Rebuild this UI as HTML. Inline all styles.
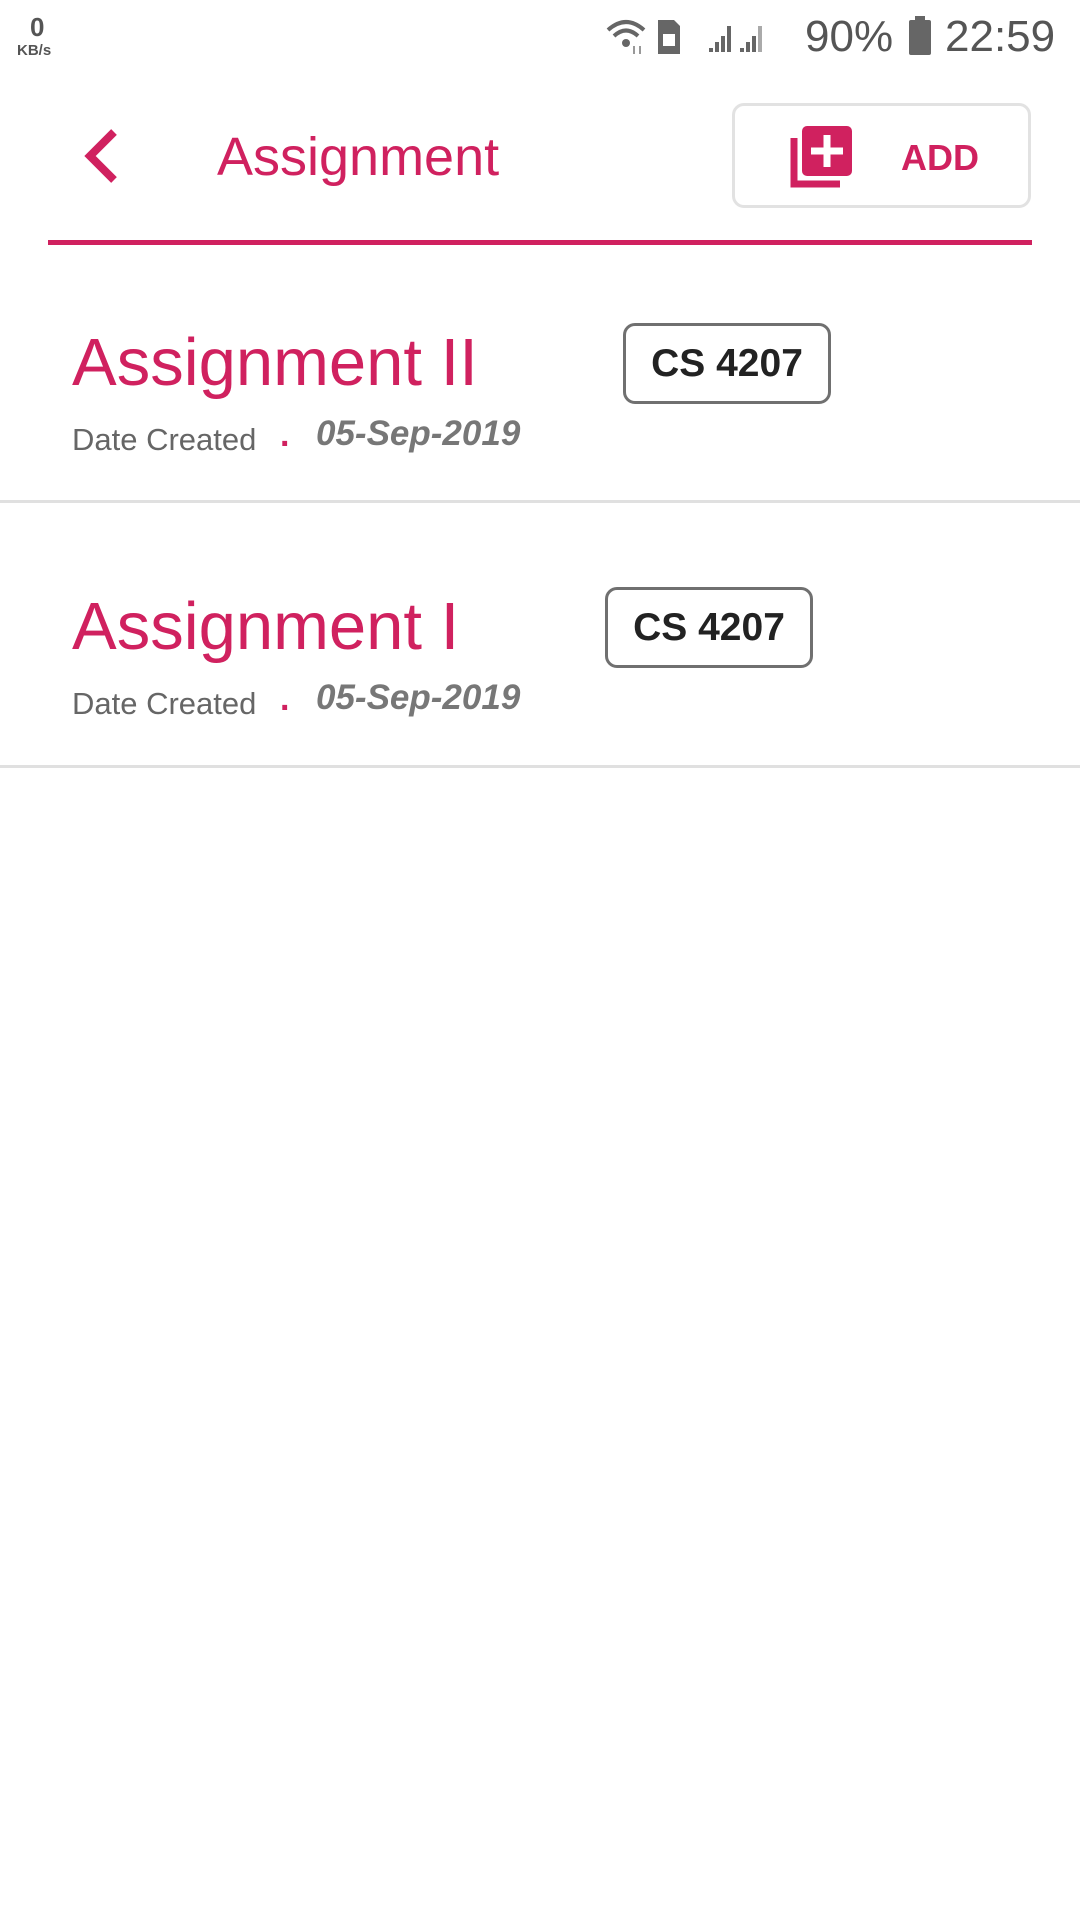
<!DOCTYPE html>
<html><head><meta charset="utf-8"><style>
body{margin:0;width:1080px;height:1920px;background:#fff;position:relative;overflow:hidden;font-family:"Liberation Sans",sans-serif}
.a{position:absolute;white-space:nowrap}
.pk{color:#d0215f}
.chip{position:absolute;border:3px solid #707070;border-radius:12px;box-sizing:border-box;display:flex;align-items:center;justify-content:center;font-size:39px;font-weight:bold;color:#222}
.div{position:absolute;left:0;width:1080px;height:3px;background:#e0e0e0}
</style></head><body>
<!-- status bar -->
<div class="a" style="left:30px;top:12px;font-size:26px;font-weight:bold;color:#555">0</div>
<div class="a" style="left:17px;top:42px;font-size:15px;font-weight:bold;color:#555">KB/s</div>
<svg class="a" style="left:604px;top:16px" width="190" height="40" viewBox="0 0 190 40">
<path d="M4 14 Q22 -2 40 14" stroke="#666" stroke-width="4" fill="none"/>
<path d="M10 20 Q22 9 34 20" stroke="#666" stroke-width="4" fill="none"/>
<circle cx="22" cy="27" r="4" fill="#666"/>
<path d="M30 30v8M36 38v-8" stroke="#999" stroke-width="2"/>
<path d="M54 4h16l6 6v28h-22z" fill="#666"/><rect x="59" y="18" width="12" height="12" fill="#fff"/>
<path d="M107 36v-4M113 36v-10M119 36v-16M125 36v-26" stroke="#666" stroke-width="4"/>
<path d="M138 36v-4M144 36v-10M150 36v-16" stroke="#666" stroke-width="4"/><path d="M156 36v-26" stroke="#aaa" stroke-width="4"/>
</svg>
<div class="a" style="left:805px;top:12px;font-size:44px;color:#555">90%</div>
<div class="a" style="left:909px;top:20px;width:22px;height:35px;background:#666;border-radius:2px"></div>
<div class="a" style="left:915px;top:16px;width:10px;height:5px;background:#666"></div>
<div class="a" style="left:945px;top:12px;font-size:44px;color:#555">22:59</div>
<!-- header -->
<svg class="a" style="left:80px;top:128px" width="44" height="56" viewBox="0 0 44 56"><path d="M34 4 L10 28 L34 52" stroke="#d0215f" stroke-width="8" fill="none"/></svg>
<div class="a pk" style="left:217px;top:126px;font-size:54px">Assignment</div>
<div class="a" style="left:732px;top:103px;width:299px;height:105px;border:3px solid #e2e2e2;border-radius:12px;box-sizing:border-box"></div>
<svg class="a" style="left:790px;top:126px" width="62" height="62" viewBox="0 0 62 62">
<rect x="12" y="0" width="50" height="50" rx="5" fill="#d0215f"/>
<path d="M37 9v32M21 25h32" stroke="#fff" stroke-width="7"/>
<path d="M4 12v46h46" stroke="#d0215f" stroke-width="7" fill="none"/>
</svg>
<div class="a pk" style="left:901px;top:137px;font-size:36px;font-weight:bold">ADD</div>
<div class="a" style="left:48px;top:240px;width:984px;height:5px;background:#d0215f"></div>
<!-- item 1 -->
<div class="a pk" style="left:72px;top:324px;font-size:67px">Assignment II</div>
<div class="chip" style="left:623px;top:323px;width:208px;height:81px">CS 4207</div>
<div class="a" style="left:72px;top:422px;font-size:31px;color:#666">Date Created</div>
<div class="a pk" style="left:280px;top:416px;font-size:34px;font-weight:bold">.</div>
<div class="a" style="left:316px;top:414px;font-size:35px;color:#777;font-style:italic;font-weight:bold">05-Sep-2019</div>
<div class="div" style="top:500px"></div>
<!-- item 2 -->
<div class="a pk" style="left:72px;top:588px;font-size:67px">Assignment I</div>
<div class="chip" style="left:605px;top:587px;width:208px;height:81px">CS 4207</div>
<div class="a" style="left:72px;top:686px;font-size:31px;color:#666">Date Created</div>
<div class="a pk" style="left:280px;top:680px;font-size:34px;font-weight:bold">.</div>
<div class="a" style="left:316px;top:678px;font-size:35px;color:#777;font-style:italic;font-weight:bold">05-Sep-2019</div>
<div class="div" style="top:765px"></div>
</body></html>
